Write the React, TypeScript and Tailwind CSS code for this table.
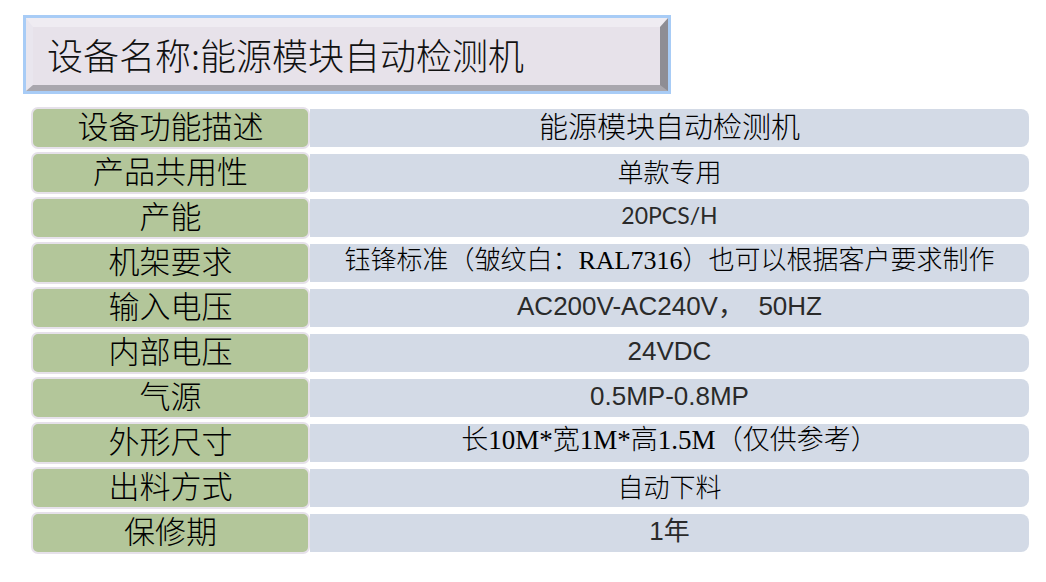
const cjk = '"Noto Sans CJK SC", sans-serif';
const serif = '"Liberation Serif", "Noto Sans CJK SC", serif';
const arial = '"Liberation Sans", "Noto Sans CJK SC", sans-serif';

type Row = {
  label: string;
  value: string;
  font: "cjk" | "serif" | "arial" | "lato";
  size: string;
};

const rows: Row[] = [
  { label: "设备功能描述", value: "能源模块自动检测机", font: "cjk", size: "text-[29px]" },
  { label: "产品共用性", value: "单款专用", font: "cjk", size: "text-[26px]" },
  { label: "产能", value: "20PCS/H", font: "lato", size: "text-[23px]" },
  { label: "机架要求", value: "钰锋标准（皱纹白：RAL7316）也可以根据客户要求制作", font: "serif", size: "text-[26px]" },
  { label: "输入电压", value: "AC200V-AC240V，  50HZ", font: "arial", size: "text-[26px]" },
  { label: "内部电压", value: "24VDC", font: "arial", size: "text-[26px]" },
  { label: "气源", value: "0.5MP-0.8MP", font: "arial", size: "text-[26px]" },
  { label: "外形尺寸", value: "长10M*宽1M*高1.5M（仅供参考）", font: "serif", size: "text-[27px]" },
  { label: "出料方式", value: "自动下料", font: "cjk", size: "text-[26px]" },
  { label: "保修期", value: "1年", font: "arial", size: "text-[26px]" },
];

const fontFor = (f: Row["font"]) =>
  f === "cjk" ? cjk : f === "serif" ? serif : f === "arial" ? arial : '"Lato", "Noto Sans CJK SC", sans-serif';

export default function App() {
  return (
    <div className="w-[1046px] h-[582px] bg-white pt-[15px] pl-[23px] text-black">
      {/* title plate with bevel */}
      <div className="w-[648px] h-[79px] border-[3px] border-[#A8CCF6]">
        <div className="h-full w-full bg-[#E7E2EA] border-t-[9px] border-l-[7px] border-r-[8px] border-b-[6px] border-t-[#EFECF2] border-l-[#E9E6EE] border-r-[#8E8D94] border-b-[#A9A7AE] flex items-center pl-[14px]">
          <span
            className="text-[36px] leading-none text-[#111] pb-[5px] font-light"
            style={{ fontFamily: cjk }}
          >
            设备名称:能源模块自动检测机
          </span>
        </div>
      </div>

      {/* spec table */}
      <div className="ml-[8px] mt-[13px] w-[998px] grid grid-cols-[279px_719px] auto-rows-[42px] gap-y-[3px]">
        {rows.map((r) => (
          <div key={r.label} className="contents">
            <div className="rounded-[7px] border-[2px] border-[#E6E1EA] bg-[#B3C69A] flex items-center justify-center">
              <span className="text-[31px] leading-none pb-[7px] font-light" style={{ fontFamily: cjk }}>
                {r.label}
              </span>
            </div>
            <div className="my-[2px] rounded-r-[8px] bg-[#D3DAE6] flex items-center justify-center whitespace-pre">
              <span
                className={`${r.size} leading-none pb-[5px] ${r.font === "cjk" || r.font === "serif" ? "font-light" : "font-normal text-[#2a2a2a]"}`}
                style={{ fontFamily: fontFor(r.font) }}
              >
                {r.value}
              </span>
            </div>
          </div>
        ))}
      </div>
    </div>
  );
}
